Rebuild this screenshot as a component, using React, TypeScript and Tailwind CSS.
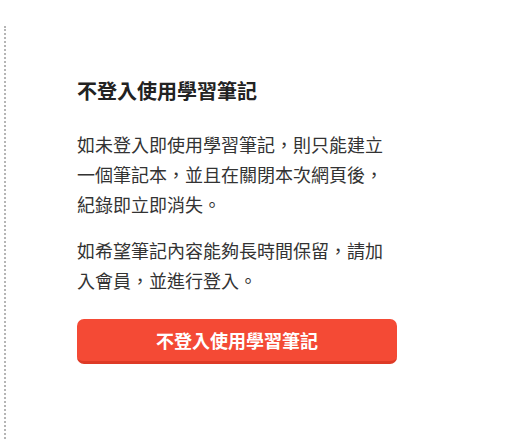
import React from "react";

export default function App() {
  return (
    <div
      className="w-[509px] h-[439px] overflow-hidden bg-white pt-[26px] pl-[4px]"
      style={{ fontFamily: '"Noto Sans CJK TC", "Noto Sans", sans-serif' }}
    >
      <div className="h-[500px] border-l-2 border-dotted border-[#b5b5b5] pl-[71px] pt-[51px]">
        <div className="w-[320px]">
          <h2 className="text-[20px] leading-[28px] font-bold text-[#222]">不登入使用學習筆記</h2>
          <p className="mt-[24px] text-[18px] leading-[30px] text-[#333]">
            如未登入即使用學習筆記，則只能建立一個筆記本，並且在關閉本次網頁後，紀錄即立即消失。
          </p>
          <p className="mt-[16px] text-[18px] leading-[30px] text-[#333]">
            如希望筆記內容能夠長時間保留，請加入會員，並進行登入。
          </p>
          <button className="mt-[24px] w-[320px] h-[45px] rounded-[7px] bg-[#f44a35] border-b-[3px] border-[#de3a26] text-white text-[18px] font-bold flex items-center justify-center">
            不登入使用學習筆記
          </button>
        </div>
      </div>
    </div>
  );
}
